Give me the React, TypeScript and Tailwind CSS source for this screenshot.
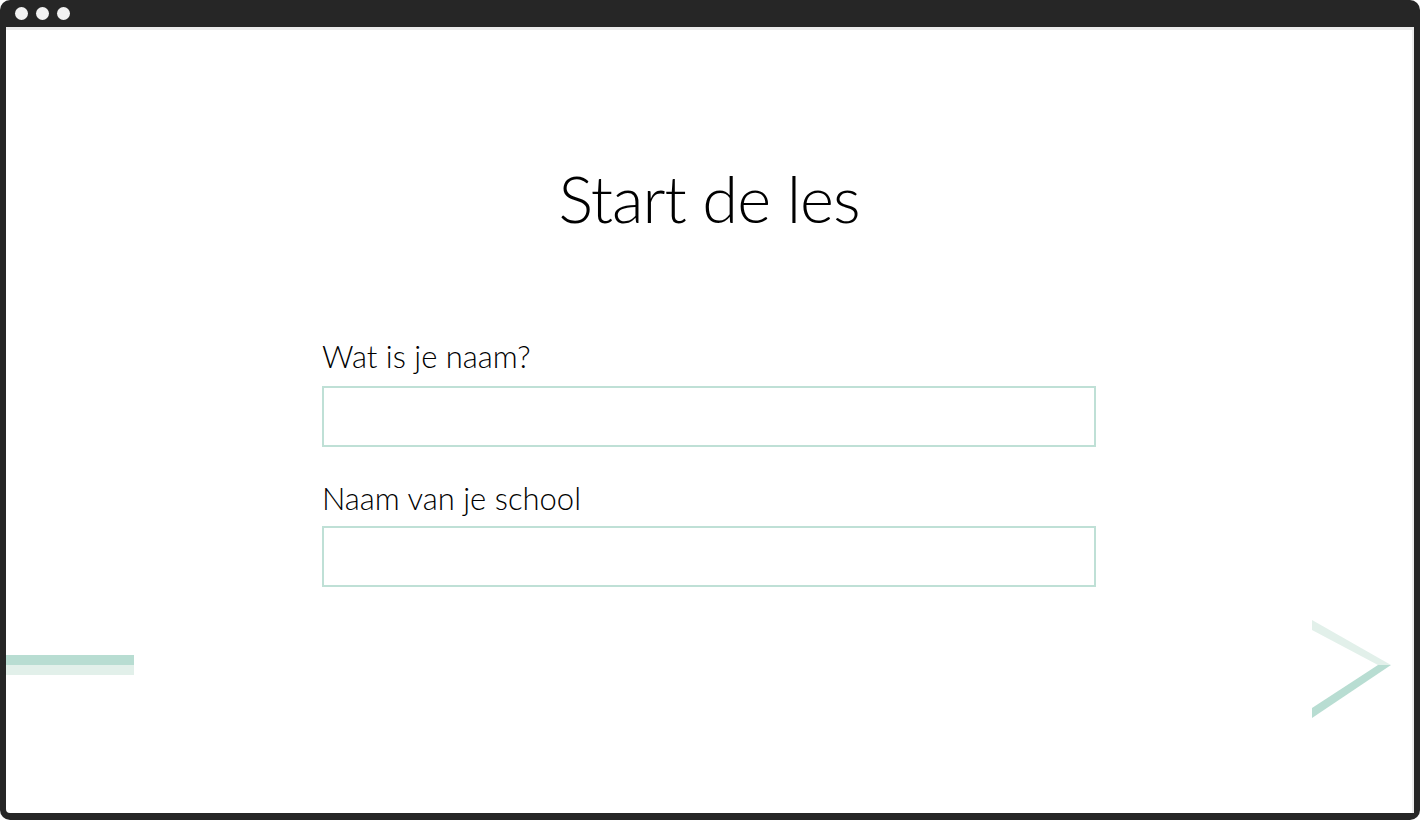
export default function App() {
  return (
    <div className="h-[820px] w-[1420px] bg-[#262626] rounded-[10px] flex flex-col overflow-hidden" style={{ fontFamily: "Lato, 'Open Sans', sans-serif" }}>
      {/* window chrome */}
      <div className="h-[27px] flex items-center gap-[8px] pl-[15px] shrink-0">
        <span className="w-[13px] h-[13px] rounded-full bg-[#f2f2f2]" />
        <span className="w-[13px] h-[13px] rounded-full bg-[#f2f2f2]" />
        <span className="w-[13px] h-[13px] rounded-full bg-[#f2f2f2]" />
      </div>

      <div className="relative flex-1 mx-[6px] mb-[7px] bg-white border-t-[3px] border-r-2 border-[#ececec] rounded-bl-[4px] flex flex-col items-center">
        <h1 className="mt-[136px] text-[65px] leading-none font-light text-black tracking-[-1px]">Start de les</h1>

        <form className="mt-[110px] w-[774px] flex flex-col">
          <label className="text-[31px] font-light text-black leading-none">Wat is je naam?</label>
          <input className="mt-[14px] h-[61px] border-2 border-[#bfe0d6] outline-none px-4 text-xl" />
          <label className="mt-[36px] text-[31px] font-light text-black leading-none">Naam van je school</label>
          <input className="mt-[12px] h-[61px] border-2 border-[#bfe0d6] outline-none px-4 text-xl" />
        </form>

        {/* left decoration */}
        <div className="absolute left-0 top-[625px] w-[128px] flex flex-col">
          <div className="h-[10px] bg-[#b8ddd2]" />
          <div className="h-[10px] bg-[#e2f0ea]" />
        </div>

        {/* right chevron */}
        <svg className="absolute left-[1306px] top-[590px]" width="80" height="100" viewBox="0 0 80 100">
          <polygon points="0,0 79,45 66,45 0,10" fill="#e2f0ea" />
          <polygon points="66,45 79,45 0,98 0,88" fill="#b8ddd2" />
        </svg>
      </div>
    </div>
  );
}
